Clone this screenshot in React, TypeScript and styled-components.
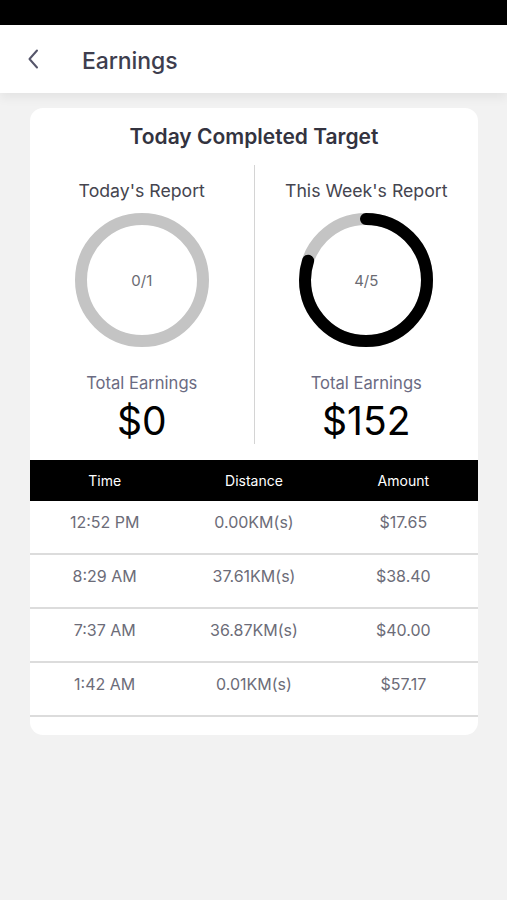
import React from "react";
import styled, { createGlobalStyle } from "styled-components";

const Global = createGlobalStyle`
  html, body { margin: 0; padding: 0; background: #f2f2f2; }
  body { font-family: Inter, "Noto Sans", "Liberation Sans", sans-serif; -webkit-font-smoothing: antialiased; }
  * { box-sizing: border-box; }
`;

const Page = styled.div`
  width: 507px;
  min-height: 900px;
  background: #f2f2f2;
  display: flex;
  flex-direction: column;
`;

const StatusBar = styled.div`
  height: 25px;
  background: #000;
`;

const Header = styled.header`
  height: 68px;
  background: #fff;
  display: flex;
  align-items: center;
  padding-left: 22px;
  gap: 38px;
  box-shadow: 0 5px 10px rgba(0, 0, 0, 0.06);
  position: relative;
  z-index: 1;
`;

const BackButton = styled.button`
  border: 0;
  background: transparent;
  padding: 0;
  width: 22px;
  height: 22px;
  display: flex;
  align-items: center;
  justify-content: center;
  color: #55556a;
`;

const Title = styled.h1`
  margin: 3px 0 0;
  font-size: 23px;
  font-weight: 500;
  color: #3e3e4e;
  letter-spacing: -0.1px;
`;

const Card = styled.section`
  margin: 15px 29px 0 30px;
  background: #fff;
  border-radius: 13px;
  overflow: hidden;
  padding: 16px 0 18px;
  display: flex;
  flex-direction: column;
`;

const CardTitle = styled.h2`
  margin: 0;
  text-align: center;
  font-size: 21px;
  line-height: 26px;
  font-weight: 600;
  color: #33333f;
`;

const Reports = styled.div`
  display: grid;
  grid-template-columns: 1fr 1px 1fr;
  margin-top: 15px;
  height: 279px;
`;

const Divider = styled.div`
  background: #d4d4d4;
`;

const Report = styled.div`
  display: flex;
  flex-direction: column;
  align-items: center;
  padding-top: 15px;
`;

const ReportLabel = styled.div`
  font-size: 17.7px;
  line-height: 22px;
  color: #45454f;
`;

const RingWrap = styled.div`
  position: relative;
  width: 134px;
  height: 134px;
  margin-top: 11px;
`;

const RingText = styled.div`
  position: absolute;
  inset: 0;
  display: flex;
  align-items: center;
  justify-content: center;
  font-size: 15px;
  color: #6a6a72;
`;

const EarnLabel = styled.div`
  margin-top: 26px;
  font-size: 16.6px;
  line-height: 20px;
  color: #6b6b82;
`;

const EarnValue = styled.div`
  margin-top: 7px;
  font-size: 39px;
  line-height: 42px;
  color: #000;
  font-weight: 400;
`;

const Table = styled.div`
  margin-top: 16px;
  display: flex;
  flex-direction: column;
`;

const HeadRow = styled.div`
  display: grid;
  grid-template-columns: 1fr 1fr 1fr;
  height: 41px;
  align-items: center;
  background: #000;
`;

const HeadCell = styled.div`
  text-align: center;
  color: #fff;
  font-size: 14px;
`;

const Row = styled.div`
  display: grid;
  grid-template-columns: 1fr 1fr 1fr;
  height: 54px;
  padding-top: 11px;
  border-bottom: 2px solid #dcdcdc;
  align-items: start;
`;

const Cell = styled.div`
  text-align: center;
  color: #6c6c78;
  font-size: 16px;
  line-height: 20px;
`;

const Ring: React.FC<{ value: number; total: number }> = ({ value, total }) => {
  const r = 61;
  const c = 2 * Math.PI * r;
  const frac = total ? value / total : 0;
  return (
    <RingWrap>
      <svg width="134" height="134" viewBox="0 0 134 134">
        <circle cx="67" cy="67" r={r} fill="none" stroke="#c4c4c4" strokeWidth="12" />
        {frac > 0 && (
          <circle
            cx="67"
            cy="67"
            r={r}
            fill="none"
            stroke="#000"
            strokeWidth="12"
            strokeLinecap="round"
            strokeDasharray={`${c * frac} ${c}`}
            transform="rotate(-90 67 67)"
          />
        )}
      </svg>
      <RingText>
        {value}/{total}
      </RingText>
    </RingWrap>
  );
};

const rows = [
  ["12:52 PM", "0.00KM(s)", "$17.65"],
  ["8:29 AM", "37.61KM(s)", "$38.40"],
  ["7:37 AM", "36.87KM(s)", "$40.00"],
  ["1:42 AM", "0.01KM(s)", "$57.17"],
];

export default function App() {
  return (
    <Page>
      <Global />
      <StatusBar />
      <Header>
        <BackButton aria-label="Back">
          <svg width="14" height="22" viewBox="0 0 14 22">
            <path d="M11 2.5 L3.5 11 L11 19.5" fill="none" stroke="#55556a" strokeWidth="2" strokeLinecap="round" strokeLinejoin="round" />
          </svg>
        </BackButton>
        <Title>Earnings</Title>
      </Header>
      <Card>
        <CardTitle>Today Completed Target</CardTitle>
        <Reports>
          <Report>
            <ReportLabel>Today's Report</ReportLabel>
            <Ring value={0} total={1} />
            <EarnLabel>Total Earnings</EarnLabel>
            <EarnValue>$0</EarnValue>
          </Report>
          <Divider />
          <Report>
            <ReportLabel>This Week's Report</ReportLabel>
            <Ring value={4} total={5} />
            <EarnLabel>Total Earnings</EarnLabel>
            <EarnValue>$152</EarnValue>
          </Report>
        </Reports>
        <Table>
          <HeadRow>
            <HeadCell>Time</HeadCell>
            <HeadCell>Distance</HeadCell>
            <HeadCell>Amount</HeadCell>
          </HeadRow>
          {rows.map((r) => (
            <Row key={r[0]}>
              {r.map((c, i) => (
                <Cell key={i}>{c}</Cell>
              ))}
            </Row>
          ))}
        </Table>
      </Card>
    </Page>
  );
}
